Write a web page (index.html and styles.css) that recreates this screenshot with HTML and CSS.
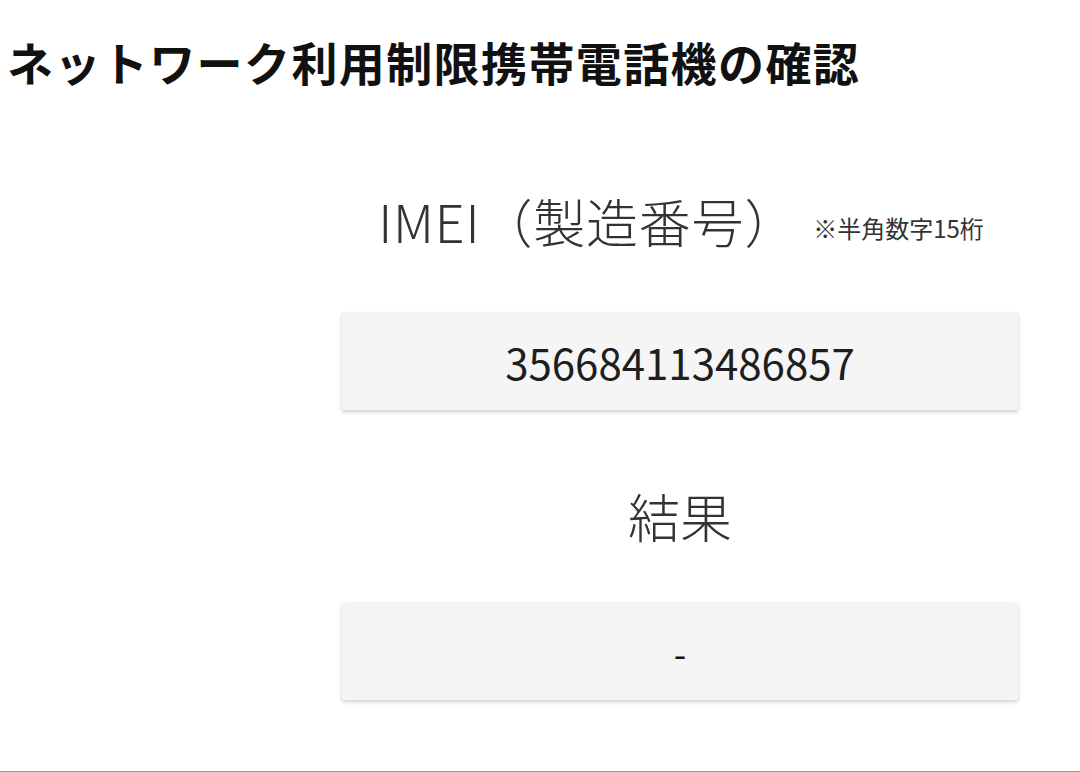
FILE: index.html
```html
<!DOCTYPE html>
<html lang="ja">
<head>
<meta charset="utf-8">
<title>ネットワーク利用制限携帯電話機の確認</title>
<link rel="stylesheet" href="styles.css">
</head>
<body>
<div class="page">
  <h1 class="title">ネットワーク利用制限携帯電話機の確認</h1>
  <main class="content">
    <h2 class="heading heading-imei">IMEI（製造番号）<span class="note">※半角数字15桁</span></h2>
    <div class="field">356684113486857</div>
    <h2 class="heading heading-result">結果</h2>
    <div class="field field-result">-</div>
  </main>
</div>
</body>
</html>
```

FILE: styles.css
```css
html, body {
  margin: 0;
  padding: 0;
  background: #ffffff;
}

body {
  font-family: "Noto Sans CJK JP", "Noto Sans", sans-serif;
  color: #222;
}

.page {
  height: 772px;
  box-sizing: border-box;
  border-bottom: 1px solid #9a9a9a;
  overflow: hidden;
  padding-top: 38px;
}

.title {
  margin: 0 0 0 7px;
  font-size: 46px;
  line-height: 46px;
  font-weight: 700;
  color: #111;
  letter-spacing: 1.4px;
  white-space: nowrap;
}

.content {
  margin-left: 342px;
  width: 676px;
  display: flex;
  flex-direction: column;
  align-items: stretch;
}

.heading {
  margin: 0;
  font-size: 52px;
  line-height: 52px;
  font-weight: 300;
  color: #333;
  text-align: center;
  white-space: nowrap;
}

.heading-imei {
  margin-top: 111px;
  margin-left: 2px;
  letter-spacing: 0.8px;
}

.note {
  font-size: 24px;
  line-height: 24px;
  color: #333;
  margin-left: 16px;
  vertical-align: 5px;
  font-weight: 400;
  letter-spacing: 0;
}

.heading-result {
  margin-top: 80px;
}

.field {
  margin-top: 66px;
  height: 97px;
  background: #f5f5f5;
  box-shadow: 0 2px 4px rgba(0, 0, 0, 0.18), 0 0 2px rgba(0, 0, 0, 0.06);
  display: flex;
  align-items: center;
  justify-content: center;
  font-size: 42px;
  color: #1e1e1e;
}

.field-result {
  margin-top: 61px;
  font-size: 36px;
  color: #111;
}
```
